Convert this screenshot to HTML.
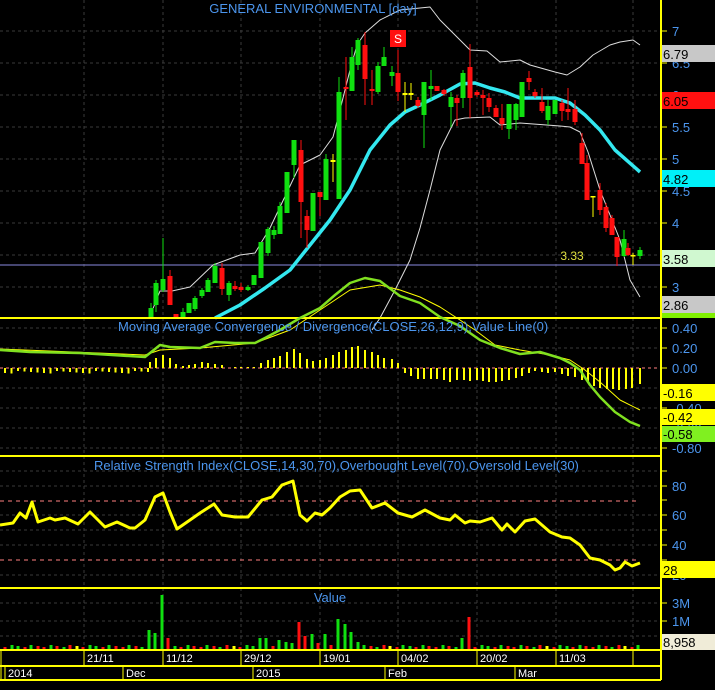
<!DOCTYPE html>
<html><head><meta charset="utf-8"><style>
body{margin:0;background:#000;width:715px;height:690px;overflow:hidden}
svg{display:block}
text{font-family:"Liberation Sans",sans-serif;}
</style></head><body>
<svg id="s" width="715" height="690" viewBox="0 0 715 690" xmlns="http://www.w3.org/2000/svg">
<rect width="715" height="690" fill="#000"/>
<g id="g"></g>
</svg>
<script>
var NS="http://www.w3.org/2000/svg",G=document.getElementById("g");
function el(t,a,txt){var e=document.createElementNS(NS,t);for(var k in a)e.setAttribute(k,a[k]);if(txt!=null)e.textContent=txt;G.appendChild(e);return e;}
function line(x1,y1,x2,y2,c,w,d){var a={x1:x1,y1:y1,x2:x2,y2:y2,stroke:c,"stroke-width":w||1};if(d)a["stroke-dasharray"]=d;el("line",a);}
function pl(pts,c,w){el("polyline",{points:pts.map(function(p){return p.join(",")}).join(" "),fill:"none",stroke:c,"stroke-width":w,"stroke-linejoin":"round"});}
function txt(x,y,s,c,sz,anch){el("text",{x:x,y:y,fill:c,"font-size":sz||13,"text-anchor":anch||"start"},s);}
var GR="#3a3a3a",BL="#4c96ee",YE="#ffff00";
// vertical grid
[84,163,241,320,398,477,556,633].forEach(function(x){line(x,0,x,650,GR,1,"3,3");});
// price grid
for(var p=7;p>=3;p-=0.5){var y=31+(7-p)*64;line(0,y,661,y,GR,1,"3,3");}
// macd grid
[328,348,388,408,428,448].forEach(function(y){line(0,y,661,y,GR,1,"3,3");});
// rsi grid
[471,486,515,530,545,575].forEach(function(y){line(0,y,661,y,GR,1,"3,3");});
[603,621,636].forEach(function(y){line(0,y,661,y,GR,1,"3,3");});
// purple line
line(0,265,661,265,"#8a8ae0",1);
// bands
pl([[150,316],[160,291],[172,291],[190,287],[213,265],[240,255],[255,253],[270,228],[300,165],[320,155],[333,137],[340,110],[350,70],[357,45],[365,33],[380,20],[400,10],[430,7],[440,20],[455,35],[470,50],[487,51],[500,62],[520,60],[530,65],[555,72],[567,75],[580,67],[593,55],[610,45],[620,42],[633,40],[640,45]],"#ddd",1);
pl([[372,330],[380,318],[395,290],[410,260],[420,228],[430,190],[440,150],[455,120],[465,118],[490,117],[500,125],[520,123],[560,126],[570,127],[580,132],[588,152],[600,190],[610,215],[620,240],[630,280],[640,297]],"#ddd",1);
pl([[215,318],[240,305],[265,288],[290,270],[310,245],[330,220],[350,190],[370,150],[390,125],[405,112],[420,105],[440,95],[460,84],[475,83],[490,88],[505,92],[520,98],[540,98],[555,98],[570,103],[585,115],[600,130],[615,150],[640,172]],"#33e8f0",3.5);
// candles [x, top, bottom, wickTop, wickBot, color]
var R="#ff1010",Gn="#10e010",Y=YE;
var C=[[151,308,318,303,318,Gn],[156,283,305,280,312,Gn],[163,279,290,238,292,Gn],[170,276,305,270,305,R],[176,314,318,314,318,R],[183,312,318,308,318,Gn],[189,303,313,303,313,Gn],[195,298,309,296,311,Gn],[202,290,296,288,298,Gn],[208,280,292,278,292,Gn],[215,266,283,263,283,Gn],[222,268,289,263,295,R],[229,283,295,281,301,Gn],[235,286,289,281,291,R],[241,287,290,283,292,R],[248,287,290,285,291,Gn],[254,275,285,275,285,Gn],[261,242,278,242,278,Gn],[268,229,253,227,256,Gn],[274,230,235,226,239,Gn],[280,206,234,202,234,Gn],[287,172,213,172,213,Gn],[294,140,165,140,178,Gn],[301,150,202,140,238,R],[307,216,230,210,248,R],[313,193,231,193,231,Gn],[320,192,197,192,216,R],[326,159,200,154,200,Gn],[333,160,162,154,182,Y],[339,92,199,77,199,Gn],[346,87,89,57,120,R],[352,57,91,47,91,Gn],[358,40,65,38,70,Gn],
[365,45,79,32,105,R],[372,89,91,70,105,R],[378,66,92,62,94,Gn],[384,57,66,47,66,Gn],[392,72,76,66,86,Gn],[398,73,92,50,101,R],[405,93,95,82,112,Y],[411,93,95,83,100,Y],[418,100,106,97,108,R],[424,82,115,82,148,Gn],[431,86,89,70,100,Gn],[437,86,91,86,91,R],[444,90,94,89,96,R],[451,97,107,92,127,Gn],[457,98,103,95,126,R],[463,73,98,70,108,Gn],[470,67,98,44,118,R],[477,92,95,90,97,R],[483,95,98,90,115,R],[489,98,107,93,112,R],[496,108,117,105,117,R],[502,118,124,104,130,R],[509,104,129,104,139,Gn],[516,104,120,103,130,Gn],[522,82,117,82,117,Gn],[529,78,82,71,90,R],[535,92,96,89,98,R],[542,102,111,88,113,R],[548,106,120,100,125,Gn],[555,100,114,100,114,Gn],[562,103,111,100,121,R],[568,109,112,88,120,R],[575,109,122,100,125,R],[582,143,164,133,164,R],[587,163,200,155,200,R],[593,196,197,196,217,Y],[600,190,210,183,215,R],[606,207,228,203,232,R],[612,218,235,215,235,R],[617,237,257,237,266,R],[624,239,256,230,257,Gn],[628,248,255,243,256,R],[633,255,256,253,265,Y],[640,250,256,247,259,Gn]];
C.forEach(function(c){line(c[0],c[3],c[0],c[4],c[5],1);el("rect",{x:c[0]-2.5,y:c[1],width:5,height:Math.max(1.5,c[2]-c[1]),fill:c[5]});});
// S marker
el("rect",{x:390,y:30,width:16,height:17,fill:"#ff1010"});txt(398,43,"S","#fff",12,"middle");
txt(572,260,"3.33","#e0e040",12,"middle");
// title
txt(313,13,"GENERAL ENVIRONMENTAL [day]",BL,13,"middle");
// panel separators
line(0,318,661,318,YE,2);
// MACD
line(0,368,661,368,"#ff8080",1,"3,3");
for(var x=5;x<=148;x+=6.5){el("rect",{x:x-1,y:368,width:2,height:3+((x*7)%3),fill:YE});}
var up=[[150,6],[156,10],[163,13],[170,10],[176,4],[183,2],[189,3],[195,4],[202,6],[208,5],[215,4],[222,3],[235,1],[241,1],[248,1],[254,1],[261,5],[268,8],[274,10],[280,12],[287,16],[294,19],[300,15],[307,9],[313,7],[320,8],[326,10],[333,13],[339,16],[346,18],[352,21],[358,22],[365,18],[372,16],[378,13],[384,10],[392,9],[398,5]];
up.forEach(function(b){el("rect",{x:b[0]-1,y:368-b[1],width:2,height:b[1],fill:YE});});
var dn=[[405,5],[411,8],[418,11],[424,11],[431,11],[437,11],[444,12],[450,14],[457,12],[464,12],[470,13],[477,12],[483,13],[489,14],[496,14],[502,13],[509,12],[516,10],[522,8],[529,5],[535,3],[542,4],[548,5],[555,4],[562,6],[568,8],[575,9],[582,12],[588,15],[594,18],[600,20],[607,21],[613,21],[619,22],[626,21],[632,20],[640,16]];
dn.forEach(function(b){el("rect",{x:b[0]-1,y:368,width:2,height:b[1],fill:YE});});
pl([[0,349],[145,355],[160,350],[200,348],[255,343],[290,330],[320,310],[350,290],[380,285],[400,290],[420,297],[440,307],[460,320],[475,330],[495,345],[520,350],[550,355],[570,360],[585,370],[600,382],[620,400],[640,410]],YE,1);
pl([[0,350],[30,352],[80,353],[145,357],[160,345],[170,347],[200,348],[215,342],[235,343],[255,343],[265,338],[280,330],[300,318],[320,308],[335,295],[350,283],[365,278],[380,281],[400,296],[420,303],[440,317],[460,326],[480,340],[500,348],[520,354],[540,352],[560,358],[570,363],[580,370],[590,385],[600,397],[615,412],[630,422],[640,426]],"#80e020",2.5);
txt(118,331,"Moving Average Convergence / Divergence(CLOSE,26,12,9),Value Line(0)",BL,13);
line(0,456,661,456,YE,2);
// RSI
line(0,501,640,501,"#ff8080",1,"4,4");line(0,560,640,560,"#ff8080",1,"4,4");
pl([[0,525],[13,523],[20,513],[26,518],[32,502],[38,522],[50,518],[55,520],[65,518],[78,524],[90,512],[105,527],[117,522],[130,528],[135,528],[145,520],[155,497],[163,493],[170,512],[177,529],[190,520],[200,513],[214,504],[222,515],[235,517],[248,517],[262,500],[272,497],[282,485],[293,481],[300,515],[307,521],[315,513],[322,515],[330,508],[340,497],[350,491],[360,490],[372,508],[385,503],[398,513],[412,517],[425,510],[440,518],[450,520],[455,515],[465,523],[470,521],[480,522],[492,518],[502,530],[507,524],[515,532],[525,521],[535,519],[550,532],[562,537],[570,538],[580,545],[590,558],[600,560],[610,565],[615,570],[620,568],[625,562],[632,566],[640,563]],YE,3);
txt(94,470,"Relative Strength Index(CLOSE,14,30,70),Overbought Level(70),Oversold Level(30)",BL,13);
line(0,588,661,588,YE,2);
// volume
txt(330,602,"Value",BL,13,"middle");
var spikes={150:[20,Gn],156:[17,Gn],163:[55,Gn],170:[12,R],261:[12,Gn],268:[12,Gn],280:[10,Gn],287:[8,Gn],293:[7,Gn],300:[28,R],307:[14,R],313:[16,Gn],320:[7,R],326:[16,Gn],333:[5,R],339:[31,Gn],346:[26,Gn],352:[18,Gn],358:[8,Gn],463:[12,Gn],470:[33,R]};
var cols=[R,Gn,Gn,R,Gn,R,R,Gn,R,Gn,R,Y];
var i=0;for(var x=5;x<=641;x+=6.53,i++){var xi=Math.round(x),h=3+(i*5%3),c=cols[i%cols.length];for(var k in spikes){if(Math.abs(k-xi)<3){h=spikes[k][0];c=spikes[k][1];}}el("rect",{x:xi-1.5,y:650-h,width:3,height:h,fill:c});}
// date rows
line(0,650,661,650,YE,2);line(0,666,661,666,YE,2);line(0,680,661,680,YE,2);
[84,163,241,320,398,477,556,633].forEach(function(x){line(x,650,x,666,YE,1);});
[["21/11",87],["11/12",166],["29/12",244],["19/01",323],["04/02",401],["20/02",480],["11/03",559]].forEach(function(d){txt(d[1],662,d[0],"#fff",11);});
[[6,"2014"],[124,"Dec"],[254,"2015"],[386,"Feb"],[516,"Mar"]].forEach(function(d){line(d[0]-1,666,d[0]-1,680,YE,1);txt(d[0]+2,677,d[1],"#fff",11);});
line(1,650,1,680,YE,1);
// right axis
line(661,0,661,680,YE,2);
for(var p=7;p>=3;p-=0.5){var y=31+(7-p)*64;line(661,y,667,y,YE,1);var s=(p%1==0)?String(p):p.toFixed(1);txt(672,y+5,s,BL,13);}
[[328,"0.40"],[348,"0.20"],[368,"0.00"],[388,"-0.20"],[408,"-0.40"],[428,"-0.60"],[448,"-0.80"]].forEach(function(a){line(661,a[0],667,a[0],YE,1);txt(672,a[0]+5,a[1],BL,13);});
[[471,""],[486,"80"],[500,""],[515,"60"],[530,""],[545,"40"],[560,""],[575,"20"]].forEach(function(a){line(661,a[0],667,a[0],YE,1);if(a[1])txt(672,a[0]+5,a[1],BL,13);});
[[603,"3M"],[621,"1M"],[636,""]].forEach(function(a){line(661,a[0],667,a[0],YE,1);if(a[1])txt(672,a[0]+5,a[1],BL,13);});
function box(y,h,bg,s,c){el("rect",{x:662,y:y,width:53,height:h,fill:bg});txt(663,y+h-3,s,c||"#000",13);}
box(45,17,"#c8c8c8","6.79");box(92,17,"#ff1010","6.05");box(170,17,"#00f0f8","4.82");box(250,17,"#d0f8d0","3.58");box(296,17,"#c8c8c8","2.86");
el("rect",{x:662,y:313,width:53,height:5,fill:"#80f000"});
box(384,17,YE,"-0.16");box(409,16,YE,"-0.42");box(426,16,"#80f020","-0.58");
box(561,17,YE,"28");box(634,16,"#f0ecd8","8,958");
</script>
</body></html>
